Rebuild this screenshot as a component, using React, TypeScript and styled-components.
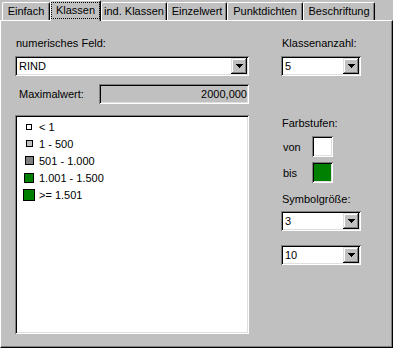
import React from 'react';
import styled, { createGlobalStyle, css } from 'styled-components';

const GlobalStyle = createGlobalStyle`
  html, body {
    margin: 0;
    padding: 0;
    background: #c0c0c0;
  }
  body {
    font-family: "Liberation Sans", Arial, sans-serif;
    font-size: 11px;
    color: #000;
  }
`;

const sunken = css`
  box-shadow: inset 1px 1px #808080, inset -1px -1px #fff, inset 2px 2px #000, inset -2px -2px #dfdfdf;
`;

const tabs = [
  { label: 'Einfach', width: 48 },
  { label: 'Klassen', width: 51, active: true },
  { label: 'ind. Klassen', width: 66 },
  { label: 'Einzelwert', width: 60 },
  { label: 'Punktdichten', width: 76 },
  { label: 'Beschriftung', width: 72 },
];

const classes = [
  { label: '< 1', size: 6, color: '#fff' },
  { label: '1 - 500', size: 7, color: '#c0c0c0' },
  { label: '501 - 1.000', size: 9, color: '#808080' },
  { label: '1.001 - 1.500', size: 10, color: '#008000' },
  { label: '>= 1.501', size: 12, color: '#008000' },
];

const ComboBox = ({ value, width }: { value: string; width: number }) => (
  <Combo $w={width}>
    <ComboText>{value}</ComboText>
    <DropButton>
      <svg width="7" height="4" viewBox="0 0 7 4" shapeRendering="crispEdges">
        <path d="M0 0h7v1H0zM1 1h5v1H1zM2 2h3v1H2zM3 3h1v1H3z" fill="#000" />
      </svg>
    </DropButton>
  </Combo>
);

const App = () => {
  return (
    <Window>
      <GlobalStyle />
      <TabRow>
        {tabs.map((t) => (
          <Tab key={t.label} $w={t.width} $active={t.active}>
            {t.active ? <Focus>{t.label}</Focus> : t.label}
          </Tab>
        ))}
      </TabRow>
      <Panel>
        <LeftCol>
          <Label>numerisches Feld:</Label>
          <ComboBox value="RIND" width={234} />
          <MaxRow>
            <MaxLabel>Maximalwert:</MaxLabel>
            <MaxField>2000,000</MaxField>
          </MaxRow>
          <ListBox>
            {classes.map((c) => (
              <ListRow key={c.label}>
                <IconSlot>
                  <Square $size={c.size} $color={c.color} />
                </IconSlot>
                <RowText>{c.label}</RowText>
              </ListRow>
            ))}
          </ListBox>
        </LeftCol>
        <RightCol>
          <Label>Klassenanzahl:</Label>
          <ComboBox value="5" width={80} />
          <Label $top={41}>Farbstufen:</Label>
          <SwatchRow>
            <SwatchLabel>von</SwatchLabel>
            <Swatch $color="#fff" />
          </SwatchRow>
          <SwatchRow $top={5}>
            <SwatchLabel>bis</SwatchLabel>
            <Swatch $color="#008000" />
          </SwatchRow>
          <Label $top={10} $bottom={5}>Symbolgröße:</Label>
          <ComboBox value="3" width={80} />
          <Spacer />
          <ComboBox value="10" width={80} />
        </RightCol>
      </Panel>
    </Window>
  );
};

export default App;

const Window = styled.div`
  width: 393px;
  height: 348px;
  overflow: hidden;
  background: #c0c0c0;
`;

const TabRow = styled.div`
  display: flex;
  align-items: flex-end;
  height: 20px;
  padding-left: 2px;
  position: relative;
  z-index: 1;
`;

const Tab = styled.div<{ $w: number; $active?: boolean }>`
  box-sizing: border-box;
  width: ${(p) => p.$w}px;
  height: ${(p) => (p.$active ? 21 : 18)}px;
  margin-bottom: ${(p) => (p.$active ? -1 : 0)}px;
  padding-top: ${(p) => (p.$active ? 1 : 2)}px;
  background: #c0c0c0;
  border-top: 1px solid #fff;
  border-left: 1px solid #fff;
  border-right: 1px solid #000;
  border-radius: 2px 2px 0 0;
  box-shadow: inset -1px 0 #808080;
  display: flex;
  justify-content: center;
  align-items: flex-start;
  line-height: 13px;
  white-space: nowrap;
`;

const Focus = styled.span`
  box-sizing: border-box;
  width: 100%;
  height: 17px;
  padding-top: 1px;
  border: 1px dotted #000;
  text-align: center;
`;

const Panel = styled.div`
  box-sizing: border-box;
  width: 393px;
  height: 328px;
  border-top: 1px solid #fff;
  border-left: 1px solid #fff;
  border-right: 1px solid #000;
  border-bottom: 1px solid #000;
  box-shadow: inset -1px -1px #808080;
  display: flex;
  padding: 16px 0 0 14px;
`;

const LeftCol = styled.div`
  width: 234px;
  display: flex;
  flex-direction: column;
`;

const RightCol = styled.div`
  width: 80px;
  margin-left: 32px;
  display: flex;
  flex-direction: column;
`;

const Label = styled.div<{ $top?: number; $bottom?: number }>`
  line-height: 13px;
  margin-top: ${(p) => p.$top ?? 0}px;
  margin-bottom: ${(p) => p.$bottom ?? 6}px;
  padding-left: 1px;
  white-space: nowrap;
`;

const Combo = styled.div<{ $w: number }>`
  box-sizing: border-box;
  width: ${(p) => p.$w}px;
  height: 20px;
  padding: 2px;
  display: flex;
  background: #fff;
  ${sunken}
`;

const ComboText = styled.div`
  flex: 1;
  padding-left: 2px;
  line-height: 16px;
`;

const DropButton = styled.div`
  width: 16px;
  height: 16px;
  background: #c0c0c0;
  box-shadow: inset -1px -1px #000, inset 1px 1px #dfdfdf, inset -2px -2px #808080, inset 2px 2px #fff;
  display: flex;
  align-items: center;
  justify-content: center;
  padding-bottom: 1px;
  box-sizing: border-box;
`;

const MaxRow = styled.div`
  display: flex;
  align-items: center;
  height: 20px;
  margin: 8px 0 11px;
`;

const MaxLabel = styled.div`
  width: 81px;
  padding-left: 4px;
  white-space: nowrap;
`;

const MaxField = styled.div`
  box-sizing: border-box;
  width: 153px;
  height: 20px;
  padding: 2px 2px 0 0;
  line-height: 16px;
  text-align: right;
  background: #c0c0c0;
  ${sunken}
`;

const ListBox = styled.div`
  box-sizing: border-box;
  width: 234px;
  height: 219px;
  padding: 3px 0 0 8px;
  background: #fff;
  ${sunken}
`;

const ListRow = styled.div`
  display: flex;
  align-items: center;
  height: 17px;
`;

const IconSlot = styled.div`
  width: 12px;
  display: flex;
  align-items: center;
  justify-content: center;
`;

const Square = styled.div<{ $size: number; $color: string }>`
  box-sizing: border-box;
  width: ${(p) => p.$size}px;
  height: ${(p) => p.$size}px;
  border: 1px solid #000;
  background: ${(p) => p.$color};
`;

const RowText = styled.span`
  margin-left: 4px;
  white-space: nowrap;
`;

const SwatchRow = styled.div<{ $top?: number }>`
  display: flex;
  align-items: center;
  height: 21px;
  margin-top: ${(p) => p.$top ?? 0}px;
`;

const SwatchLabel = styled.div`
  width: 31px;
  padding-left: 2px;
  box-sizing: border-box;
`;

const Swatch = styled.div<{ $color: string }>`
  box-sizing: border-box;
  width: 21px;
  height: 21px;
  background: ${(p) => p.$color};
  ${sunken}
`;

const Spacer = styled.div`
  height: 14px;
`;
